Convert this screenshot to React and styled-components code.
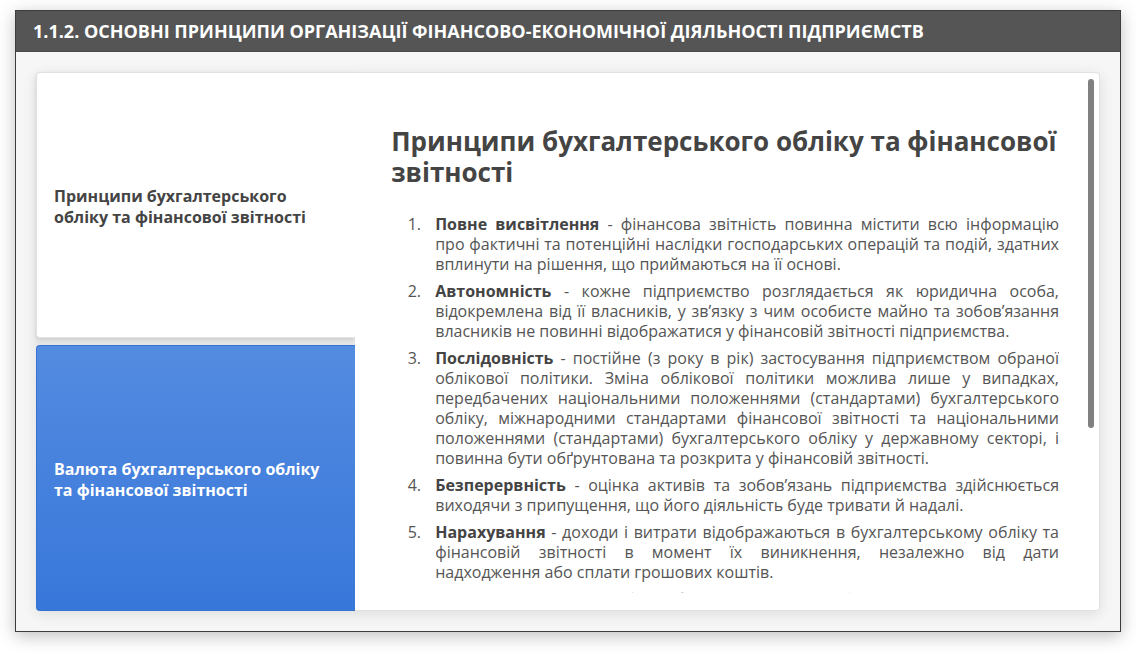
import React, { useState } from "react";
import styled, { createGlobalStyle } from "styled-components";

const GlobalStyle = createGlobalStyle`
  *, *::before, *::after { box-sizing: border-box; }
  body {
    margin: 0;
    background: #fff;
    font-family: "Open Sans", "Noto Sans", sans-serif;
    color: #444;
  }
`;

const Page = styled.main`
  display: flex;
  height: 100vh;
  padding: 10px 15px 21px;
`;

const Window = styled.section`
  flex: 1;
  min-width: 0;
  display: flex;
  flex-direction: column;
  border: 1px solid #3c3e3c;
  background: #f6f6f6;
  box-shadow: 0 4px 16px rgba(0, 0, 0, 0.25);
`;

const TitleBar = styled.header`
  flex: none;
  padding: 8px 17px;
  background: #555;
  border-bottom: 1px solid #4a4a4a;
`;

const Title = styled.h1`
  margin: 0;
  font-size: 18px;
  line-height: 24px;
  font-weight: 700;
  color: #fff;
`;

const Body = styled.div`
  flex: 1;
  min-height: 0;
  display: flex;
  padding: 20px;
`;

const Panel = styled.div`
  flex: 1;
  min-width: 0;
  display: flex;
  border-radius: 4px;
  box-shadow: 0 3px 14px rgba(0, 0, 0, 0.1);
`;

const TabList = styled.div`
  flex: 0 0 30%;
  display: flex;
  flex-direction: column;
  gap: 7px;
  border-radius: 4px 0 0 4px;
  background: #e6e6e6;
`;

const Tab = styled.button`
  flex: 1;
  padding: 4px 30px 0 17px;
  border: 1px solid ${(p) => (p.$active ? "#e2e2e2" : "#3572d2")};
  border-right: 0;
  border-radius: 4px 0 0 4px;
  background: ${(p) => (p.$active ? "#fff" : "linear-gradient(#538be0, #3877da)")};
  box-shadow: ${(p) => (p.$active ? "0 2px 4px rgba(0, 0, 0, 0.1)" : "none")};
  color: ${(p) => (p.$active ? "#444" : "#fff")};
  font: 700 16px/21px "Open Sans", "Noto Sans", sans-serif;
  text-align: left;
  cursor: pointer;
`;

const Content = styled.div`
  position: relative;
  flex: 1;
  min-width: 0;
  display: flex;
  padding: 18px 40px 17px 36px;
  border: 1px solid #e2e2e2;
  border-left: 0;
  border-radius: 0 4px 4px 0;
  background: #fff;
`;

const Scroller = styled.div`
  flex: 1;
  min-width: 0;
  overflow-y: auto;
  scrollbar-width: none;
`;

const ScrollThumb = styled.div`
  position: absolute;
  top: 6px;
  right: 5px;
  width: 6px;
  height: 65%;
  border-radius: 3px;
  background: #808080;
`;

const Heading = styled.h2`
  margin: 35px 0 26px;
  font-size: 26px;
  line-height: 31px;
  font-weight: 700;
`;

const Principles = styled.ol`
  margin: 0;
  padding: 0 0 0 34px;
  font-size: 16px;
  line-height: 20px;
  color: #555;
  text-align: justify;
`;

const Principle = styled.li`
  margin-bottom: 7px;
  padding-left: 10px;
`;

const Term = styled.strong`
  font-weight: 700;
  color: #444;
`;

const tabs = [
  "Принципи бухгалтерського обліку та фінансової звітності",
  "Валюта бухгалтерського обліку та фінансової звітності",
];

const principles = [
  ["Повне висвітлення", "фінансова звітність повинна містити всю інформацію про фактичні та потенційні наслідки господарських операцій та подій, здатних вплинути на рішення, що приймаються на її основі."],
  ["Автономність", "кожне підприємство розглядається як юридична особа, відокремлена від її власників, у зв’язку з чим особисте майно та зобов’язання власників не повинні відображатися у фінансовій звітності підприємства."],
  ["Послідовність", "постійне (з року в рік) застосування підприємством обраної облікової політики. Зміна облікової політики можлива лише у випадках, передбачених національними положеннями (стандартами) бухгалтерського обліку, міжнародними стандартами фінансової звітності та національними положеннями (стандартами) бухгалтерського обліку у державному секторі, і повинна бути обґрунтована та розкрита у фінансовій звітності."],
  ["Безперервність", "оцінка активів та зобов’язань підприємства здійснюється виходячи з припущення, що його діяльність буде тривати й надалі."],
  ["Нарахування", "доходи і витрати відображаються в бухгалтерському обліку та фінансовій звітності в момент їх виникнення, незалежно від дати надходження\u00a0або сплати грошових коштів."],
  ["Превалювання сутності над формою", "операції обліковуються відповідно до їх сутності, а не лише виходячи з юридичної форми."],
];

export default function App() {
  const [active, setActive] = useState(0);
  return (
    <>
      <GlobalStyle />
      <Page>
        <Window>
          <TitleBar>
            <Title>1.1.2. ОСНОВНІ ПРИНЦИПИ ОРГАНІЗАЦІЇ ФІНАНСОВО-ЕКОНОМІЧНОЇ ДІЯЛЬНОСТІ ПІДПРИЄМСТВ</Title>
          </TitleBar>
          <Body>
            <Panel>
              <TabList role="tablist" aria-orientation="vertical">
                {tabs.map((label, i) => (
                  <Tab key={label} type="button" role="tab" aria-selected={i === active} $active={i === active} onClick={() => setActive(i)}>
                    {label}
                  </Tab>
                ))}
              </TabList>
              <Content role="tabpanel">
                <Scroller>
                  <Heading>{tabs[active]}</Heading>
                  {active === 0 && (
                    <Principles>
                      {principles.map(([term, text]) => (
                        <Principle key={term}>
                          <Term>{term}</Term> - {text}
                        </Principle>
                      ))}
                    </Principles>
                  )}
                </Scroller>
                <ScrollThumb />
              </Content>
            </Panel>
          </Body>
        </Window>
      </Page>
    </>
  );
}
